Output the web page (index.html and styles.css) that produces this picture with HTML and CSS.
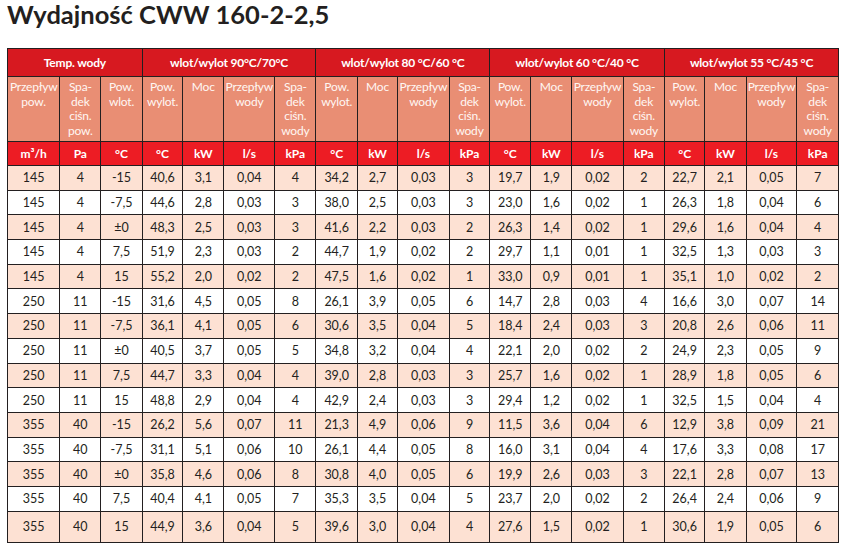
FILE: index.html
```html
<!DOCTYPE html>
<html lang="pl">
<head>
<meta charset="utf-8">
<title>Wydajność CWW 160-2-2,5</title>
<link rel="stylesheet" href="styles.css">
</head>
<body>
<h1 class="title">Wydajność CWW 160-2-2,5</h1>
<table class="perf">
  <colgroup>
    <col class="c523"><col class="c410"><col class="c414">
    <col class="c406"><col class="c410"><col class="c510"><col class="c410">
    <col class="c417"><col class="c400"><col class="c517"><col class="c406">
    <col class="c410"><col class="c410"><col class="c513"><col class="c414">
    <col class="c403"><col class="c413"><col class="c507"><col class="c417">
  </colgroup>
  <thead>
    <tr class="h-group">
      <th colspan="3">Temp. wody</th>
      <th colspan="4">wlot/wylot 90°C/70°C</th>
      <th colspan="4">wlot/wylot 80 °C/60 °C</th>
      <th colspan="4">wlot/wylot 60 °C/40 °C</th>
      <th colspan="4">wlot/wylot 55 °C/45 °C</th>
    </tr>
    <tr class="h-names">
      <th>Przepływ<br>pow.</th><th>Spa-<br>dek<br>ciśn.<br>pow.</th><th>Pow.<br>wlot.</th>
      <th>Pow.<br>wylot.</th><th>Moc</th><th>Przepływ<br>wody</th><th>Spa-<br>dek<br>ciśn.<br>wody</th>
      <th>Pow.<br>wylot.</th><th>Moc</th><th>Przepływ<br>wody</th><th>Spa-<br>dek<br>ciśn.<br>wody</th>
      <th>Pow.<br>wylot.</th><th>Moc</th><th>Przepływ<br>wody</th><th>Spa-<br>dek<br>ciśn.<br>wody</th>
      <th>Pow.<br>wylot.</th><th>Moc</th><th>Przepływ<br>wody</th><th>Spa-<br>dek<br>ciśn.<br>wody</th>
    </tr>
    <tr class="h-units">
      <th>m³/h</th><th>Pa</th><th>°C</th>
      <th>°C</th><th>kW</th><th>l/s</th><th>kPa</th>
      <th>°C</th><th>kW</th><th>l/s</th><th>kPa</th>
      <th>°C</th><th>kW</th><th>l/s</th><th>kPa</th>
      <th>°C</th><th>kW</th><th>l/s</th><th>kPa</th>
    </tr>
  </thead>
  <tbody>
    <tr class="alt"><td>145</td><td>4</td><td>-15</td><td>40,6</td><td>3,1</td><td>0,04</td><td>4</td><td>34,2</td><td>2,7</td><td>0,03</td><td>3</td><td>19,7</td><td>1,9</td><td>0,02</td><td>2</td><td>22,7</td><td>2,1</td><td>0,05</td><td>7</td></tr>
    <tr><td>145</td><td>4</td><td>-7,5</td><td>44,6</td><td>2,8</td><td>0,03</td><td>3</td><td>38,0</td><td>2,5</td><td>0,03</td><td>3</td><td>23,0</td><td>1,6</td><td>0,02</td><td>1</td><td>26,3</td><td>1,8</td><td>0,04</td><td>6</td></tr>
    <tr class="alt"><td>145</td><td>4</td><td>±0</td><td>48,3</td><td>2,5</td><td>0,03</td><td>3</td><td>41,6</td><td>2,2</td><td>0,03</td><td>2</td><td>26,3</td><td>1,4</td><td>0,02</td><td>1</td><td>29,6</td><td>1,6</td><td>0,04</td><td>4</td></tr>
    <tr><td>145</td><td>4</td><td>7,5</td><td>51,9</td><td>2,3</td><td>0,03</td><td>2</td><td>44,7</td><td>1,9</td><td>0,02</td><td>2</td><td>29,7</td><td>1,1</td><td>0,01</td><td>1</td><td>32,5</td><td>1,3</td><td>0,03</td><td>3</td></tr>
    <tr class="alt"><td>145</td><td>4</td><td>15</td><td>55,2</td><td>2,0</td><td>0,02</td><td>2</td><td>47,5</td><td>1,6</td><td>0,02</td><td>1</td><td>33,0</td><td>0,9</td><td>0,01</td><td>1</td><td>35,1</td><td>1,0</td><td>0,02</td><td>2</td></tr>
    <tr><td>250</td><td>11</td><td>-15</td><td>31,6</td><td>4,5</td><td>0,05</td><td>8</td><td>26,1</td><td>3,9</td><td>0,05</td><td>6</td><td>14,7</td><td>2,8</td><td>0,03</td><td>4</td><td>16,6</td><td>3,0</td><td>0,07</td><td>14</td></tr>
    <tr class="alt"><td>250</td><td>11</td><td>-7,5</td><td>36,1</td><td>4,1</td><td>0,05</td><td>6</td><td>30,6</td><td>3,5</td><td>0,04</td><td>5</td><td>18,4</td><td>2,4</td><td>0,03</td><td>3</td><td>20,8</td><td>2,6</td><td>0,06</td><td>11</td></tr>
    <tr><td>250</td><td>11</td><td>±0</td><td>40,5</td><td>3,7</td><td>0,05</td><td>5</td><td>34,8</td><td>3,2</td><td>0,04</td><td>4</td><td>22,1</td><td>2,0</td><td>0,02</td><td>2</td><td>24,9</td><td>2,3</td><td>0,05</td><td>9</td></tr>
    <tr class="alt"><td>250</td><td>11</td><td>7,5</td><td>44,7</td><td>3,3</td><td>0,04</td><td>4</td><td>39,0</td><td>2,8</td><td>0,03</td><td>3</td><td>25,7</td><td>1,6</td><td>0,02</td><td>1</td><td>28,9</td><td>1,8</td><td>0,05</td><td>6</td></tr>
    <tr><td>250</td><td>11</td><td>15</td><td>48,8</td><td>2,9</td><td>0,04</td><td>4</td><td>42,9</td><td>2,4</td><td>0,03</td><td>3</td><td>29,4</td><td>1,2</td><td>0,02</td><td>1</td><td>32,5</td><td>1,5</td><td>0,04</td><td>4</td></tr>
    <tr class="alt"><td>355</td><td>40</td><td>-15</td><td>26,2</td><td>5,6</td><td>0,07</td><td>11</td><td>21,3</td><td>4,9</td><td>0,06</td><td>9</td><td>11,5</td><td>3,6</td><td>0,04</td><td>6</td><td>12,9</td><td>3,8</td><td>0,09</td><td>21</td></tr>
    <tr><td>355</td><td>40</td><td>-7,5</td><td>31,1</td><td>5,1</td><td>0,06</td><td>10</td><td>26,1</td><td>4,4</td><td>0,05</td><td>8</td><td>16,0</td><td>3,1</td><td>0,04</td><td>4</td><td>17,6</td><td>3,3</td><td>0,08</td><td>17</td></tr>
    <tr class="alt"><td>355</td><td>40</td><td>±0</td><td>35,8</td><td>4,6</td><td>0,06</td><td>8</td><td>30,8</td><td>4,0</td><td>0,05</td><td>6</td><td>19,9</td><td>2,6</td><td>0,03</td><td>3</td><td>22,1</td><td>2,8</td><td>0,07</td><td>13</td></tr>
    <tr><td>355</td><td>40</td><td>7,5</td><td>40,4</td><td>4,1</td><td>0,05</td><td>7</td><td>35,3</td><td>3,5</td><td>0,04</td><td>5</td><td>23,7</td><td>2,0</td><td>0,02</td><td>2</td><td>26,4</td><td>2,4</td><td>0,06</td><td>9</td></tr>
    <tr class="alt last"><td>355</td><td>40</td><td>15</td><td>44,9</td><td>3,6</td><td>0,04</td><td>5</td><td>39,6</td><td>3,0</td><td>0,04</td><td>4</td><td>27,6</td><td>1,5</td><td>0,02</td><td>1</td><td>30,6</td><td>1,9</td><td>0,05</td><td>6</td></tr>
  </tbody>
</table>
</body>
</html>
```

FILE: styles.css
```css
html, body {
  margin: 0;
  padding: 0;
  background: #ffffff;
}

body {
  font-family: Lato, "Open Sans", "Liberation Sans", sans-serif;
  color: #231f20;
}

.title {
  margin: 0;
  padding: 0 0 0 7px;
  height: 48px;
  font-family: Lato, "Liberation Sans", sans-serif;
  font-weight: 700;
  font-size: 25.5px;
  line-height: 28px;
  color: #231f20;
}

.perf {
  margin-left: 7px;
  width: 831px;
  table-layout: fixed;
  border-collapse: collapse;
  border: 1.5px solid #231f20;
  font-size: 12px;
}

.perf th,
.perf td {
  border: 1px solid #231f20;
  padding: 0;
  text-align: center;
  overflow: hidden;
}

.c400 { width: 40px; }
.c403 { width: 40.3px; }
.c406 { width: 40.6px; }
.c410 { width: 41px; }
.c413 { width: 41.3px; }
.c414 { width: 41.4px; }
.c417 { width: 41.7px; }
.c507 { width: 50.7px; }
.c510 { width: 51px; }
.c513 { width: 51.3px; }
.c517 { width: 51.7px; }
.c523 { width: 52.3px; }

.h-group th {
  height: 27px;
  background: #d71920;
  color: #ffffff;
  font-weight: 700;
  font-size: 12px;
  letter-spacing: -0.2px;
}

.h-names th {
  height: 61px;
  background: #e98e74;
  color: #fff7f3;
  font-weight: 400;
  font-size: 12px;
  line-height: 14.5px;
  vertical-align: top;
  padding-top: 3px;
  letter-spacing: -0.2px;
}

.h-units th {
  height: 23px;
  background: #ed1c24;
  color: #ffffff;
  font-weight: 700;
  font-size: 12px;
}

.perf tbody td {
  height: 23.7px;
  font-size: 12.5px;
  color: #231f20;
}

.perf tbody tr.alt td {
  background: #fde1d3;
}

.perf tbody tr.last td {
  height: 30.7px;
}
```
